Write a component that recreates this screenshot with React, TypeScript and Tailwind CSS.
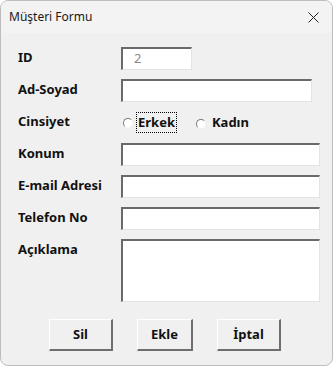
import React from 'react';

const font = { fontFamily: '"Noto Sans", "Open Sans", sans-serif' };

function Field({ className = '', children }: { className?: string; children?: React.ReactNode }) {
    return (
        <div
            className={`bg-white border-t-2 border-l-2 border-b border-r border-t-[#6a6a6a] border-l-[#6a6a6a] border-b-[#e3e3e3] border-r-[#e3e3e3] ${className}`}
        >
            {children}
        </div>
    );
}

function Radio() {
    return (
        <span className="inline-block w-[10px] h-[10px] rounded-full bg-white border border-t-[#7a7a7a] border-l-[#7a7a7a] border-b-[#f4f4f4] border-r-[#f4f4f4]" />
    );
}

function Button({ label, width }: { label: string; width: string }) {
    return (
        <button
            className={`${width} h-[32px] bg-[#f0f0f0] border-t border-l border-b-2 border-r-2 border-t-white border-l-white border-b-[#6e6e6e] border-r-[#6e6e6e] text-[13px] font-bold text-[#111] flex items-center justify-center`}
        >
            {label}
        </button>
    );
}

export default function App() {
    return (
        <div className="w-[333px] h-[366px] bg-white" style={font}>
            <div className="w-[333px] h-[366px] rounded-[8px] border border-[#bdbdbd] bg-[#f0f0f0] flex flex-col overflow-hidden">
                {/* Title bar */}
                <div className="h-[32px] flex items-center justify-between pl-[8px] pr-[9px] bg-[#f3f3f3] flex-shrink-0">
                    <span className="text-[12px] text-[#1a1a1a]">Müşteri Formu</span>
                    <svg width="11" height="11" viewBox="0 0 11 11" className="mr-[4px]">
                        <path d="M0.5 0.5 L10.5 10.5 M10.5 0.5 L0.5 10.5" stroke="#222" strokeWidth="1" />
                    </svg>
                </div>

                {/* Form */}
                <div className="flex flex-col gap-[9px] pt-[14px] pl-[17px]">
                    <div className="flex items-start h-[23px]">
                        <span className="w-[103px] text-[13px] font-bold leading-[20px] text-[#111]">ID</span>
                        <Field className="w-[71px] h-[23px] flex items-center pl-[11px]">
                            <span className="text-[13px] text-[#8a8a8a]">2</span>
                        </Field>
                    </div>
                    <div className="flex items-start h-[23px]">
                        <span className="w-[103px] text-[13px] font-bold leading-[20px] text-[#111]">Ad-Soyad</span>
                        <Field className="w-[191px] h-[23px]" />
                    </div>
                    <div className="flex items-center h-[23px]">
                        <span className="w-[103px] text-[13px] font-bold leading-[20px] text-[#111] -mt-[4px]">Cinsiyet</span>
                        <div className="flex items-center pl-[2px]">
                            <Radio />
                            <span className="ml-[3px] px-[1px] h-[21px] flex items-center border border-dotted border-black text-[13px] font-bold text-[#111]">
                                Erkek
                            </span>
                            <span className="ml-[19px]"><Radio /></span>
                            <span className="ml-[6px] text-[13px] font-bold text-[#111]">Kadın</span>
                        </div>
                    </div>
                    <div className="flex items-start h-[23px]">
                        <span className="w-[103px] text-[13px] font-bold leading-[20px] text-[#111]">Konum</span>
                        <Field className="w-[199px] h-[23px]" />
                    </div>
                    <div className="flex items-start h-[23px]">
                        <span className="w-[103px] text-[13px] font-bold leading-[20px] text-[#111]">E-mail Adresi</span>
                        <Field className="w-[199px] h-[23px]" />
                    </div>
                    <div className="flex items-start h-[23px]">
                        <span className="w-[103px] text-[13px] font-bold leading-[20px] text-[#111]">Telefon No</span>
                        <Field className="w-[199px] h-[23px]" />
                    </div>
                    <div className="flex items-start h-[63px]">
                        <span className="w-[103px] text-[13px] font-bold leading-[20px] text-[#111]">Açıklama</span>
                        <Field className="w-[199px] h-[63px]" />
                    </div>
                </div>

                {/* Buttons */}
                <div className="flex mt-[17px] pl-[48px] gap-[24px]">
                    <Button label="Sil" width="w-[64px]" />
                    <Button label="Ekle" width="w-[56px]" />
                    <Button label="İptal" width="w-[64px]" />
                </div>
            </div>
        </div>
    );
}
